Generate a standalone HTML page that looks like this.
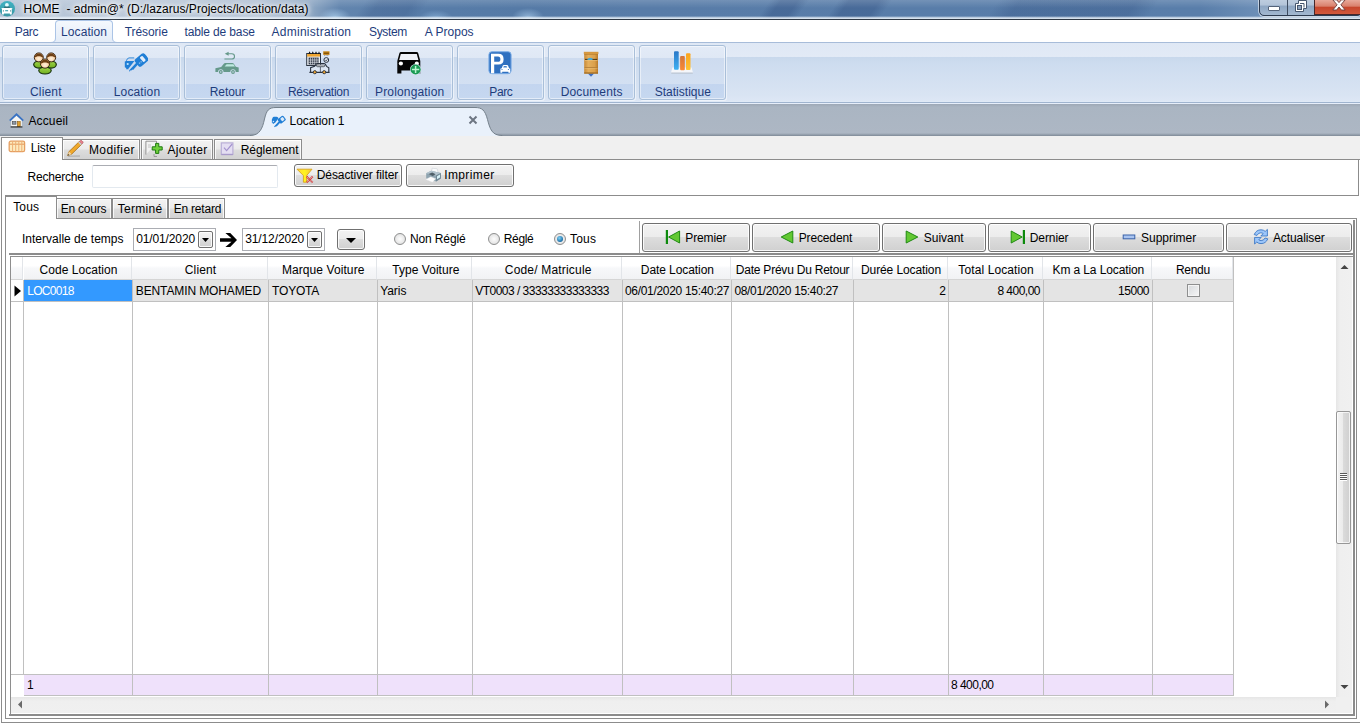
<!DOCTYPE html>
<html lang="fr"><head><meta charset="utf-8"><title>HOME - admin@* (D:/lazarus/Projects/location/data)</title>
<style>
html,body{margin:0;padding:0;}
body{width:1360px;height:723px;position:relative;overflow:hidden;background:#fff;font-family:"Liberation Sans",sans-serif;font-size:12px;}
div,span,svg{position:absolute;box-sizing:border-box;}
.t{white-space:nowrap;line-height:14px;font-size:12px;}
/* title */
#title{left:0;top:0;width:1360px;height:20px;background:
 radial-gradient(ellipse 16px 9px at 335px 17px,rgba(170,205,235,.75),rgba(170,205,235,0)),radial-gradient(ellipse 17px 8px at 436px 18px,rgba(150,190,228,.6),rgba(150,190,228,0)),radial-gradient(ellipse 16px 9px at 528px 17px,rgba(165,200,232,.7),rgba(165,200,232,0)),
 linear-gradient(rgba(255,255,255,.16),rgba(255,255,255,0) 8px),
 linear-gradient(125deg,rgba(40,70,120,0) 0,rgba(40,70,120,0) 300px,rgba(40,70,120,.22) 312px,rgba(40,70,120,.22) 340px,rgba(40,70,120,0) 352px,rgba(40,70,120,0) 631px,rgba(40,70,120,.33) 640px,rgba(40,70,120,.33) 654px,rgba(40,70,120,0) 663px,rgba(40,70,120,0) 687px,rgba(40,70,120,.33) 696px,rgba(40,70,120,.33) 721px,rgba(40,70,120,0) 731px,rgba(40,70,120,0) 818px,rgba(40,70,120,.26) 836px,rgba(40,70,120,.26) 932px,rgba(40,70,120,0) 950px),
 linear-gradient(90deg,#b4c4d6 0,#bac8d9 120px,#aebfd3 260px,#8fa8c4 310px,#6285ae 340px,#587da9 420px,#557aa6 520px,#587ca8 640px,#597eaa 1200px,#6d8fb7 1260px);}
#title .bl{left:0;top:16px;width:1360px;height:3px;background:linear-gradient(rgba(235,243,250,0),rgba(235,243,250,.8) 60%,rgba(235,243,250,.9));}
#title .bd{left:0;top:19px;width:1360px;height:1px;background:#2e3844;}
/* menu */
#menu{left:0;top:20px;width:1360px;height:23px;background:#fff;}
#ribbon{left:0;top:42px;width:1360px;height:62px;border-top:1px solid #a7bcd9;background:linear-gradient(#dfe8f5 0,#e2eaf6 14px,#c8d8ec 14px,#cddcef 20px,#d9e4f3 52px,#dde7f5 58px,#e6eefa 60px);}
#ribbon .bot{left:0;top:59px;width:1360px;height:1px;background:#9fb4cf;}
.rb{top:2px;width:87px;height:55px;border:1px solid #a9bfd9;border-radius:3px;background:linear-gradient(#e3ebf7 0,#dfe8f5 12px,#cddbef 12px,#d3e0f2 38px,#c3d5ef 38px,#c6d8f0 53px);box-shadow:inset 0 0 0 1px rgba(255,255,255,.5),1px 1px 0 rgba(255,255,255,.5);}
#mtab{left:55px;top:0px;width:58px;height:24px;border:1px solid #abc4e6;border-bottom:none;border-radius:4px 4px 0 0;background:linear-gradient(#f4f8fd,#e2ebf7);}
/* gray zone */
#gray{left:0;top:104px;width:1360px;height:32px;background:linear-gradient(#9da8b6 0,#aab5c2 3px,#adb7c4 29px,#8e99a6 31px,#7f8a97 32px);}
#band{left:0;top:136px;width:1360px;height:24px;background:#f0f0f0;}
.line{background:#8c8c8c;}
/* generic win7 button */
.btn{border:1px solid #707070;border-radius:3px;background:linear-gradient(#f3f3f3 0,#ececec 48%,#dddddd 50%,#d0d0d0 100%);box-shadow:inset 0 0 0 1px rgba(255,255,255,.85);}
.tab{border:1px solid #8c8c8c;border-bottom:none;background:linear-gradient(#f3f3f3 0,#ebebeb 48%,#dddddd 52%,#d2d2d2 100%);box-shadow:inset 1px 1px 0 rgba(255,255,255,.8),inset -1px 0 0 rgba(255,255,255,.8);}
.tabsel{border:1px solid #8c8c8c;border-bottom:none;background:#fff;}
.hdr{top:257px;height:23px;background:linear-gradient(#ffffff 0,#ffffff 40%,#f7f8fa 50%,#f1f2f4 100%);border-right:1px solid #e2e5e9;border-bottom:1px solid #d5d5d5;}
.vl{top:257px;width:1px;height:438px;background:#c0c0c0;}
.radio{width:12px;height:12px;border-radius:50%;border:1px solid #8e8f8f;background:radial-gradient(circle at 50% 50%,#fdfdfd 0,#e8e8e8 60%,#cfcfcf 100%);}

</style></head><body>
<div id="title"><div class="bl"></div><div class="bd"></div>
<!-- app icon -->
<svg style="left:0;top:1px" width="16" height="17" viewBox="0 0 16 17"><defs><linearGradient id="gti" x1="0" y1="0" x2="0" y2="1"><stop offset="0" stop-color="#3fb2c2"/><stop offset="1" stop-color="#3a97a5"/></linearGradient></defs><circle cx="7.200" cy="7.800" r="7.800" fill="url(#gti)"/><circle cx="6.900" cy="4" r="1.900" fill="#e4fbff"/><path d="M3.800 7l.7-1.500h4.800l.7 1.500z" fill="#2f6f78"/><path d="M1.100 7.400l1.300-.5h9l1.300 .5-.9 .7v5.400h-1.900v-1h-6v1h-1.900v-5.400z" fill="#fff"/><rect x="5.200" y="9" width="2.900" height="1.300" fill="#56aebc"/><rect x="2.900" y="9.300" width="1" height="1.200" fill="#4a8a90"/><rect x="10.100" y="9.300" width="1" height="1.200" fill="#4a8a90"/></svg>
<!-- caption buttons -->
<div style="left:1259px;top:-4px;width:103px;height:20px;border:1px solid #2d3b50;border-radius:0 0 5px 5px;background:linear-gradient(#c3d1e2 0,#b3c4d9 45%,#8ea6c3 50%,#a3b8d0 100%);box-shadow:0 0 0 1px rgba(255,255,255,.55)"></div>
<div style="left:1287px;top:0;width:1px;height:15px;background:#3d4b60"></div>
<div style="left:1314px;top:0;width:46px;height:15px;background:linear-gradient(#e8a99a 0,#d9806c 45%,#c6452c 50%,#d2593c 100%);border-left:1px solid #46272a;border-bottom:1px solid #46272a"></div>
<div style="left:1268px;top:6px;width:12px;height:5px;background:#fff;border:1px solid #54637a;border-radius:1px"></div>
<svg style="left:1294px;top:0" width="14" height="13" viewBox="0 0 14 13"><path d="M4.5 0.5h8v8h-3v3h-8v-8h3z" fill="#fff" stroke="#46566e"/><rect x="3.5" y="5.5" width="4" height="4" fill="#8ea3bd" stroke="#46566e"/><path d="M6 3.5h4v4" fill="none" stroke="#46566e"/></svg>
<svg style="left:1332px;top:-1px" width="14" height="12" viewBox="0 0 14 12"><path d="M.8 .8h3.800l2.400 2.800 2.400-2.800h3.800l-4.300 5 4.300 5.200h-3.800l-2.400-3-2.400 3h-3.800l4.300-5.200z" fill="#fff" stroke="#6b3a38" stroke-width=".9"/></svg>
</div>
<div id="menu"><div id="mtab"></div>
<svg style="left:51px;top:18px" width="5" height="5" viewBox="0 0 5 5"><path d="M0 4.500 Q4.500 4.500 4.500 0 L5 0 L5 5 L0 5Z" fill="#e4ecf8"/><path d="M0 4.500 Q4.500 4.500 4.500 0" fill="none" stroke="#abc4e6"/></svg>
<svg style="left:112px;top:18px" width="5" height="5" viewBox="0 0 5 5"><path d="M5 4.500 Q.5 4.500 .5 0 L0 0 L0 5 L5 5Z" fill="#e4ecf8"/><path d="M5 4.500 Q.5 4.500 .5 0" fill="none" stroke="#abc4e6"/></svg>
</div>
<div id="ribbon"><div class="bot"></div>
<div class="rb" style="left:2px"></div><div class="rb" style="left:93px"></div><div class="rb" style="left:184px"></div><div class="rb" style="left:275px"></div><div class="rb" style="left:366px"></div><div class="rb" style="left:457px"></div><div class="rb" style="left:548px"></div><div class="rb" style="left:639px"></div>
</div>
<div id="gray"></div>
<!-- doc active tab -->
<svg style="left:250px;top:104px" width="256" height="33" viewBox="250 104 256 33"><path d="M250 135.500 C260 135.500 262.500 128 264.500 119 C266.500 110 269 107.500 276 107.500 L475 107.500 C482 107.500 485 110 487.500 119.500 C490 129 492 135.500 502 135.500 L502 137 L250 137 Z" fill="#e9f1fb" stroke="#75818c" stroke-width="1"/><rect x="250" y="136" width="256" height="1" fill="#e9f1fb"/></svg>
<div id="band"></div>
<!-- outer tab control -->
<div style="left:1px;top:160px;width:1359px;height:563px;background:#fff"></div>
<div class="line" style="left:1px;top:159px;width:1359px;height:1px"></div>
<div class="line" style="left:1358px;top:160px;width:1px;height:36px"></div>
<div class="line" style="left:5px;top:195px;width:1354px;height:1px"></div>
<div class="line" style="left:1px;top:160px;width:1px;height:563px"></div>
<div class="line" style="left:1px;top:722px;width:1359px;height:1px"></div>
<div class="tab" style="left:62px;top:139px;width:78px;height:20px"></div>
<div class="tab" style="left:141px;top:139px;width:72px;height:20px"></div>
<div class="tab" style="left:214px;top:139px;width:88px;height:20px"></div>
<div class="tabsel" style="left:1px;top:137px;width:62px;height:23px"></div>
<div style="left:2px;top:159px;width:60px;height:2px;background:#fff"></div>
<!-- search -->
<div style="left:92px;top:165px;width:186px;height:23px;border:1px solid #e3e9ef;border-top-color:#abadb3;border-radius:2px;background:#fff"></div>
<div class="btn" style="left:294px;top:164px;width:108px;height:23px"></div>
<div class="btn" style="left:406px;top:164px;width:108px;height:23px"></div>
<!-- inner tab control -->
<div style="left:5px;top:218px;width:1352px;height:501px;border:1px solid #8c8c8c;background:#fff"></div>
<div class="tab" style="left:56px;top:198px;width:56px;height:20px"></div>
<div class="tab" style="left:112px;top:198px;width:56px;height:20px"></div>
<div class="tab" style="left:168px;top:198px;width:57px;height:20px"></div>
<div class="tabsel" style="left:5px;top:196px;width:52px;height:23px"></div>
<div style="left:6px;top:218px;width:50px;height:2px;background:#fff"></div>
<!-- filter row -->
<div style="left:133px;top:228px;width:83px;height:23px;border:1px solid #abadb3;background:#fff"></div>
<div style="left:242px;top:228px;width:83px;height:23px;border:1px solid #abadb3;background:#fff"></div>
<div class="btn" style="left:198px;top:231px;width:15px;height:17px;border-radius:2px"></div>
<div class="btn" style="left:307px;top:231px;width:15px;height:17px;border-radius:2px"></div>
<svg style="left:201px;top:237px" width="9" height="6"><path d="M1 1h7l-3.500 4z" fill="#000"/></svg>
<svg style="left:310px;top:237px" width="9" height="6"><path d="M1 1h7l-3.500 4z" fill="#000"/></svg>
<svg style="left:219px;top:232px" width="19" height="16" viewBox="219 232 19 16"><path d="M220 238.200H231.500L225.400 233H230.200L237 240L230.200 247H225.400L231.500 241.800H220Z" fill="#000"/></svg>
<div class="btn" style="left:337px;top:229px;width:28px;height:21px"></div>
<svg style="left:345px;top:237px" width="12" height="7"><path d="M1 1h10l-5 5z" fill="#000"/></svg>
<div class="radio" style="left:394px;top:233px"></div>
<div class="radio" style="left:488px;top:233px"></div>
<div class="radio" style="left:554px;top:233px"></div>
<div style="left:557px;top:236px;width:6px;height:6px;border-radius:50%;background:radial-gradient(circle at 40% 35%,#7fd0f5,#1c6fa8 70%,#14456e)"></div>
<div style="left:639px;top:221px;width:1px;height:33px;background:#a0a0a0"></div>
<div class="btn" style="left:642px;top:223px;width:108px;height:29px"></div>
<div class="btn" style="left:752px;top:223px;width:128px;height:29px"></div>
<div class="btn" style="left:882px;top:223px;width:104px;height:29px"></div>
<div class="btn" style="left:988px;top:223px;width:103px;height:29px"></div>
<div class="btn" style="left:1093px;top:223px;width:131px;height:29px"></div>
<div class="btn" style="left:1226px;top:223px;width:126px;height:29px"></div>
<!-- grid -->
<div style="left:9px;top:253px;width:1346px;height:2px;background:#8c8c8c"></div>
<div style="left:1353px;top:220px;width:2px;height:496px;background:#8c8c8c"></div>
<div style="left:9px;top:714px;width:1346px;height:2px;background:#8c8c8c"></div>
<div style="left:10px;top:256px;width:1343px;height:1px;background:#8e8e8e"></div>
<div style="left:10px;top:256px;width:1px;height:458px;background:#8e8e8e"></div>
<div style="left:11px;top:280px;width:1223px;height:21px;background:#e4e4e4"></div>
<div style="left:11px;top:280px;width:13px;height:21px;background:#fff"></div>
<div style="left:24px;top:280px;width:108px;height:21px;background:#3399ff"></div>
<div style="left:11px;top:301px;width:1223px;height:1px;background:#c0c0c0"></div>
<div class="hdr" style="left:11px;width:12px"></div>
<div class="hdr" style="left:24px;width:108px"></div>
<div class="hdr" style="left:132px;width:136px"></div>
<div class="hdr" style="left:268px;width:109px"></div>
<div class="hdr" style="left:377px;width:95px"></div>
<div class="hdr" style="left:472px;width:150px"></div>
<div class="hdr" style="left:622px;width:109px"></div>
<div class="hdr" style="left:731px;width:122px"></div>
<div class="hdr" style="left:853px;width:95px"></div>
<div class="hdr" style="left:948px;width:95px"></div>
<div class="hdr" style="left:1043px;width:109px"></div>
<div class="hdr" style="left:1152px;width:81px"></div>
<div style="left:24px;top:675px;width:1210px;height:20px;background:#efe1fb"></div>
<div style="left:11px;top:674px;width:1223px;height:1px;background:#c0c0c0"></div>
<div style="left:24px;top:695px;width:1210px;height:1px;background:#c0c0c0"></div>
<div class="vl" style="left:23px;top:280px;height:395px"></div>
<div class="vl" style="left:132px;top:280px;height:416px"></div>
<div class="vl" style="left:268px;top:280px;height:416px"></div>
<div class="vl" style="left:377px;top:280px;height:416px"></div>
<div class="vl" style="left:472px;top:280px;height:416px"></div>
<div class="vl" style="left:622px;top:280px;height:416px"></div>
<div class="vl" style="left:731px;top:280px;height:416px"></div>
<div class="vl" style="left:853px;top:280px;height:416px"></div>
<div class="vl" style="left:948px;top:280px;height:416px"></div>
<div class="vl" style="left:1043px;top:280px;height:416px"></div>
<div class="vl" style="left:1152px;top:280px;height:416px"></div>
<div class="vl" style="left:1233px;top:257px;height:439px"></div>
<svg style="left:14px;top:285px" width="8" height="12"><path d="M0.500 0.500l6.500 5.500-6.500 5.500z" fill="#000"/></svg>
<div style="left:1187px;top:284px;width:13px;height:13px;border:1px solid #8e8f8f;background:linear-gradient(135deg,#d6d9dc,#f6f6f6);box-shadow:inset 0 0 0 1px #f4f4f4"></div>
<!-- scrollbars -->
<div style="left:1336px;top:257px;width:16px;height:440px;background:linear-gradient(90deg,#e6e6e6,#efefef 4px,#f0f0f0)"></div>
<div style="left:11px;top:697px;width:1325px;height:16px;background:linear-gradient(#e6e6e6,#efefef 4px,#f0f0f0)"></div>
<div style="left:1336px;top:697px;width:16px;height:16px;background:#f0f0f0"></div>
<div style="left:1336px;top:411px;width:15px;height:133px;border:1px solid #979797;border-radius:2px;background:linear-gradient(90deg,#f4f4f4 0,#ebebeb 45%,#dadada 50%,#cfcfcf 100%);box-shadow:inset 0 0 0 1px rgba(255,255,255,.7)"></div>
<div style="left:1340px;top:473px;width:7px;height:1px;background:#5a5a5a;box-shadow:0 2px 0 #5a5a5a,0 4px 0 #5a5a5a,0 6px 0 #5a5a5a,0 1px 0 #fff,0 3px 0 #fff,0 5px 0 #fff,0 7px 0 #fff"></div>
<svg style="left:1340px;top:264px" width="9" height="6"><path d="M0.500 5l4-4 4 4z" fill="#444"/></svg>
<svg style="left:1340px;top:684px" width="9" height="6"><path d="M0.500 1l4 4 4-4z" fill="#444"/></svg>
<svg style="left:17px;top:700px" width="6" height="9"><path d="M5 0.500l-4 4 4 4z" fill="#6a6a6a"/></svg>
<svg style="left:1324px;top:700px" width="6" height="9"><path d="M1 0.500l4 4-4 4z" fill="#6a6a6a"/></svg>
<!-- ribbon icons -->
<svg style="left:33px;top:51px" width="24" height="24" viewBox="0 0 24 24">
<defs><radialGradient id="gsk" cx=".5" cy=".65" r=".6"><stop offset="0" stop-color="#fff1dc"/><stop offset="1" stop-color="#f3c08a"/></radialGradient>
<linearGradient id="ggr" x1="0" y1="0" x2="0" y2="1"><stop offset="0" stop-color="#9fd44a"/><stop offset="1" stop-color="#6fae1e"/></linearGradient></defs>
<ellipse cx="5.600" cy="13.600" rx="4.900" ry="3.500" fill="url(#ggr)" stroke="#16300a" stroke-width="1.200"/>
<circle cx="5.800" cy="6.400" r="4.500" fill="url(#gsk)" stroke="#2e1c0a" stroke-width=".9"/>
<path d="M1.200 7.200a4.600 4.600 0 0 1 9.200 0c-1.400-1.500-3-1.900-4.600-1.900s-3.200 .4-4.600 1.900z" fill="#6e3f14"/>
<ellipse cx="18.400" cy="13.600" rx="4.900" ry="3.500" fill="url(#ggr)" stroke="#16300a" stroke-width="1.200"/>
<circle cx="18.200" cy="6.400" r="4.500" fill="url(#gsk)" stroke="#2e1c0a" stroke-width=".9"/>
<path d="M13.600 7.200a4.600 4.600 0 0 1 9.200 0c-1.400-1.500-3-1.900-4.600-1.900s-3.200 .4-4.600 1.900z" fill="#6e3f14"/>
<ellipse cx="12" cy="19.600" rx="6.200" ry="3.400" fill="url(#ggr)" stroke="#16300a" stroke-width="1.200"/>
<circle cx="12" cy="12.600" r="4.600" fill="url(#gsk)" stroke="#2e1c0a" stroke-width=".9"/>
<path d="M7.300 13.400a4.700 4.700 0 0 1 9.400 0c-1.400-1.500-3.100-1.900-4.700-1.900s-3.300 .4-4.700 1.900z" fill="#6e3f14"/>
</svg>
<svg style="left:124px;top:51px" width="24" height="24" viewBox="0 0 24 24">
<g fill="#217fd6">
<path d="M.8 10.400l1.400-.5h8.200l-5.400 7h-.4v1.400h-2.400v-1.400l-1.400-.6z"/>
<path d="M5.400 20.800l-.2-1.500 8.200-8.900 1.900 1.700-6.200 6.900-.8-.6-.6 1.100-.9-.6-.6 1.100z"/>
<g transform="rotate(-40 17.600 9)"><rect x="11.400" y="4.300" width="12.400" height="9.400" rx="2.200"/><rect x="17.600" y="6" width="3.200" height="6" rx=".9" fill="#e4eefa"/><rect x="13.400" y="9.400" width="1.300" height="1.300" fill="#8fc0ee"/><rect x="15.400" y="9.400" width="1.300" height="1.300" fill="#8fc0ee"/></g>
</g>
<path d="M2.400 9.800q.6-2.600 2.600-2.900h5.200" fill="none" stroke="#217fd6" stroke-width=".9"/>
<circle cx="3.700" cy="13" r="1.100" fill="#bfe6ff"/>
<path d="M19.800 3.300q2.400.7 2.900 3.200" fill="none" stroke="#217fd6" stroke-width=".8"/>
</svg>
<svg style="left:215px;top:51px" width="24" height="24" viewBox="0 0 24 24">
<g fill="#65998a">
<path d="M.4 17.200l5.800-1.300 2.600-3.200q.5-.6 1.400-.6h7.200q.9 0 1.400.7l2 3 2.900.7v4.500h-3a2.700 2.700 0 0 0-5.400 0h-6.800a2.700 2.700 0 0 0-5.400 0h-2.700z"/>
<circle cx="5.800" cy="21" r="1.900"/><circle cx="18" cy="21" r="1.900"/><circle cx="5.800" cy="21" r=".8" fill="#cfdcef"/><circle cx="18" cy="21" r=".8" fill="#cfdcef"/>
<path d="M13.600 .8v4l-3.800-2z"/>
</g>
<path d="M9.600 15.600l2-2.400h6.800l1.600 2.400z" fill="#bfeae0"/>
<path d="M12.500 2.800h4.300q2.700 0 2.700 2.600t-2.700 2.600h-7.400" fill="none" stroke="#65998a" stroke-width="1.100"/>
</svg>
<svg style="left:306px;top:51px" width="24" height="24" viewBox="0 0 24 24">
<rect x=".7" y="2.500" width="13.800" height="12" fill="#e9edf2" stroke="#2b3340" stroke-width="1"/>
<rect x="1.200" y="3" width="12.800" height="2.600" fill="#f0a530"/>
<rect x="2.600" y="6.600" width="10" height="6.800" fill="#323a48"/>
<path d="M4.500 6.600v6.800M6.600 6.600v6.800M8.700 6.600v6.800M10.800 6.600v6.800M2.600 9h10M2.600 11.300h10" stroke="#e9edf2" stroke-width=".6"/>
<path d="M2.400 2.800l1.200-2.600 1.200 2.600zM5.600 2.800l1.200-2.600 1.200 2.600zM8.800 2.800l1.200-2.600 1.200 2.600zM12 2.800l1-2.600 1 2.600z" fill="#111"/>
<rect x="17.200" y=".3" width="6.300" height="3.600" fill="#c88414"/><rect x="17.800" y="1.700" width="5.100" height="1" fill="#6b4306"/>
<path d="M18 4.600h5" stroke="#555" stroke-width=".5" stroke-dasharray="1 .6"/>
<circle cx="20.300" cy="9" r="2.400" fill="#dfe6ee" stroke="#2b3340" stroke-width="1"/><path d="M19.300 9.300l.8.700 1.400-1.800" fill="none" stroke="#2b3340" stroke-width=".7"/>
<path d="M3.400 21.400h20.200M4.600 21v-4.400l4-1.200 1.600-2.300q.4-.6 1.200-.6h6.600q.8 0 1.200.6l1.400 2.300 2.200 1.400v4.200" fill="rgba(255,255,255,.3)" stroke="#2b3340" stroke-width="1.100"/>
<rect x="10.600" y="14" width="8" height="1.700" rx=".8" fill="#fff" stroke="#2b3340" stroke-width=".8"/>
<path d="M14.400 16v5" stroke="#2b3340" stroke-width=".7"/>
<circle cx="8.800" cy="21.200" r="1.600" fill="#f0a530" stroke="#2b3340" stroke-width=".9"/><circle cx="18.200" cy="21.200" r="1.600" fill="#f0a530" stroke="#2b3340" stroke-width=".9"/>
</svg>
<svg style="left:397px;top:51px" width="24" height="24" viewBox="0 0 24 24">
<path d="M.3 22.600v-12.600l2-7.600q.4-1.300 1.800-1.300h15.400q1.400 0 1.800 1.300l2 7.600v12.600h-4.200v-3.200h-14.700v3.200z" fill="#050505"/>
<path d="M3.800 3h16l1.600 5.900h-19.200z" fill="#eef1f7"/>
<circle cx="3.900" cy="12.500" r="2.100" fill="#fff"/><circle cx="19.800" cy="12.500" r="2.100" fill="#fff"/>
<circle cx="18.600" cy="18.500" r="5.600" fill="#dfe9f5"/>
<circle cx="18.600" cy="18.500" r="5.100" fill="#1b9a55"/>
<path d="M18.600 14.900v7.200M15 18.500h7.200" stroke="#b9f5cf" stroke-width="1.500"/>
</svg>
<svg style="left:488px;top:51px" width="24" height="24" viewBox="0 0 24 24">
<rect x=".9" y=".7" width="22.200" height="22" rx="3" fill="#2f70c0" stroke="#7eaee6" stroke-width="1"/>
<path d="M3 2.800h7.400q5.200 0 5.200 5.400t-5.200 5.400h-4.200v8.700h-3.200zM6.200 5.600v5.200h3.800q2.400 0 2.400-2.600t-2.400-2.600z" fill="#fff"/>
<path d="M12.400 21.800v-4l1.300-.6 1.100-2.600q.3-.7 1-.7h3.200q.7 0 1 .7l1.100 2.600 1.100.6v4h-1.800v-1.100h-6.200v1.100z" fill="#fff"/>
<path d="M15.200 16.600l.7-1.600h2.600l.7 1.600z" fill="#4a86cc"/><circle cx="14" cy="18.500" r=".6" fill="#2f70c0"/><circle cx="20.400" cy="18.500" r=".6" fill="#2f70c0"/>
</svg>
<svg style="left:579px;top:51px" width="24" height="26" viewBox="0 0 24 26">
<defs><linearGradient id="gwd" x1="0" y1="0" x2="1" y2="0"><stop offset="0" stop-color="#c98a36"/><stop offset=".3" stop-color="#e4ae5c"/><stop offset=".75" stop-color="#dba04a"/><stop offset="1" stop-color="#b97a2a"/></linearGradient></defs>
<path d="M8.200 21.800h7.600l-3.800 4z" fill="#3f6fc0"/>
<rect x="5.200" y="1.600" width="13.800" height="21" fill="url(#gwd)"/>
<rect x="4.800" y=".8" width="14.600" height="2.200" fill="#d59840"/>
<rect x="5.200" y="3" width="13.800" height=".6" fill="#b27a2c"/>
<rect x="6" y="7.900" width="12.200" height=".9" fill="#3a2a10"/>
<path d="M8 8.300q2.500-3 6.200-.3l-1.400 1.100h-3.600z" fill="#45a9d8"/>
<rect x="5.600" y="9" width="13" height=".6" fill="#edc47e"/>
<rect x="5.600" y="16" width="13" height=".8" fill="#a06a22"/><rect x="5.600" y="16.800" width="13" height=".6" fill="#edc47e"/>
<rect x="5.200" y="21.400" width="13.800" height="1.200" fill="#a06a22"/>
</svg>
<svg style="left:670px;top:51px" width="24" height="24" viewBox="0 0 24 24">
<defs><linearGradient id="gb1" x1="0" y1="0" x2="0" y2="1"><stop offset="0" stop-color="#2a78c8"/><stop offset="1" stop-color="#3db0f2"/></linearGradient>
<linearGradient id="gb2" x1="0" y1="0" x2="0" y2="1"><stop offset="0" stop-color="#d4763a"/><stop offset="1" stop-color="#fb8a34"/></linearGradient>
<linearGradient id="gb3" x1="0" y1="0" x2="0" y2="1"><stop offset="0" stop-color="#fba41e"/><stop offset="1" stop-color="#fdc334"/></linearGradient></defs>
<path d="M2.400 16.600h19.200l1.400 5.200h-22z" fill="#f4f6fa"/><path d="M1.200 21.600h21.600v1h-21.600z" fill="#b8c0cc"/>
<rect x="4" y=".2" width="4.700" height="18.600" rx="1" fill="url(#gb1)"/>
<rect x="10.100" y="5" width="4.700" height="14.300" rx="1" fill="url(#gb2)"/>
<rect x="16" y="2.200" width="4.500" height="16.900" rx="1" fill="url(#gb3)"/>
</svg>
<!-- doc tab icons -->
<svg style="left:9px;top:113px" width="15" height="15" viewBox="0 0 15 15">
<path d="M2.200 7.200l5.300-4.600 5.300 4.600v6.300h-10.600z" fill="#f6f6f4"/>
<path d="M.8 7.600l6.700-6.200 6.700 6.200" fill="none" stroke="#3b74c4" stroke-width="1.900"/>
<rect x="3.400" y="8.600" width="3.600" height="2.600" fill="#8c98a8" stroke="#444" stroke-width=".6"/>
<rect x="8.400" y="8.600" width="2.800" height="5" fill="#e0a030" stroke="#8a5a10" stroke-width=".6"/>
<rect x="1.600" y="13.400" width="11.800" height="1.100" fill="#222"/>
</svg>
<svg style="left:271px;top:115px" width="15" height="13" viewBox="0 0 24 21">
<g fill="#217fd6">
<path d="M1.300 7.300l1.400-3.200q.5-1.200 2-1.200h4.200q1.300 0 2 .9l1.200 1.600-5.800 7.400h-1.300v1.200h-2.300v-1.400h-1.400v-4z"/>
<path d="M4.800 18.600l8.200-9 2.400 2.200-6.300 6.900-.9-.6-.5 1-.9-.5-.6 1.100z"/>
<g transform="rotate(-38 17.200 7.600)"><rect x="11.600" y="3" width="11.400" height="9.200" rx="2.200"/><rect x="16" y="4.800" width="5.200" height="5.600" rx="1.400" fill="#dbe9f8"/></g>
</g><circle cx="3.800" cy="10.400" r="1.200" fill="#cfe6ff"/>
</svg>
<!-- close x -->
<svg style="left:468px;top:115px" width="10" height="10" viewBox="0 0 10 10"><path d="M1.500 1.500l7 7M8.500 1.500l-7 7" stroke="#6d7682" stroke-width="2"/></svg>
<!-- sub tab icons -->
<svg style="left:8px;top:140px" width="18" height="13" viewBox="0 0 18 13">
<rect x="1.200" y="1.200" width="15.400" height="10.400" rx="1.600" fill="#fdebbf" stroke="#e59f62" stroke-width="1.300"/>
<path d="M1.200 4.200h15.400" stroke="#e59f62" stroke-width="1.100"/>
<path d="M4.600 1.500v10M7.700 1.500v10M10.800 1.500v10M13.800 1.500v10" stroke="#eeb076" stroke-width="1"/>
</svg>
<svg style="left:66px;top:140px" width="18" height="17" viewBox="0 0 18 17">
<path d="M2 16.200l12-.2" stroke="#9a9a9a" stroke-width=".8"/>
<path d="M1.600 15.600l1.400-4 10.200-10 2.600 2.600-10.200 10z" fill="#f0a92c" stroke="#9a6414" stroke-width=".7"/>
<path d="M1.600 15.600l1.400-4 2.600 2.600z" fill="#f3d7a8"/><path d="M1.600 15.600l.6-1.700 1.100 1.100z" fill="#333"/>
<path d="M13.200 1.600l1.200-1q.8-.6 1.600.2l.8.800q.8.800 0 1.600l-1 1z" fill="#e8808c" stroke="#9a4a50" stroke-width=".5"/>
<path d="M12.200 2.600l2.600 2.600 1-1-2.600-2.600z" fill="#c8ccd4"/>
</svg>
<svg style="left:145px;top:140px" width="18" height="17" viewBox="0 0 18 17">
<path d="M.9 14.600v-13.400h10.600v2" fill="#f2f2f2" stroke="#8a8a8a" stroke-width=".9"/>
<path d="M9 14v2.500h3" fill="none" stroke="#8a8a8a" stroke-width=".8"/>
<path d="M3 5h3M3 7h3" stroke="#b8b8b8" stroke-width=".8"/>
<path d="M10.600 3.400h3.200v3.400h3.400v3.200h-3.400v3.400h-3.200v-3.400h-3.400v-3.200h3.400z" fill="#6fd03c" stroke="#1f7a10" stroke-width="1"/>
</svg>
<svg style="left:220px;top:142px" width="15" height="14" viewBox="0 0 15 14">
<rect x="1.300" y=".9" width="11.600" height="11.400" fill="#e4def2" stroke="#b9aed6" stroke-width="1.200"/>
<path d="M1.300 12.600h11.600" stroke="#a99bcb" stroke-width="1.200"/>
<path d="M4 5.600l2.600 3 5.600-6.600" fill="none" stroke="#a594cf" stroke-width="1.200"/>
</svg>
<!-- filter icon -->
<svg style="left:296px;top:168px" width="18" height="16" viewBox="0 0 18 16">
<defs><linearGradient id="gfl" x1="0" y1="0" x2="1" y2="0"><stop offset="0" stop-color="#ffd93a"/><stop offset=".5" stop-color="#fff41e"/><stop offset="1" stop-color="#f5c63a"/></linearGradient></defs>
<path d="M1 1.200h15l-5.400 6.400v6.600h-3.200v-6.600z" fill="url(#gfl)" stroke="#d9a31e" stroke-width=".9"/>
<path d="M10.800 8.600l5.800 6M16.600 8.600l-5.800 6" stroke="#d83a3a" stroke-width="2.100" stroke-dasharray="1 .5"/>
</svg>
<!-- printer -->
<svg style="left:425px;top:167px" width="17" height="16" viewBox="0 0 17 16">
<path d="M7 1.200l5.200.6 1 4.200-6.400-.4z" fill="#fafbfc" stroke="#c2c8ce" stroke-width=".5"/>
<path d="M1.200 6.200l5-2.400 9.600 2.200v5.600l-4.600 2.800-10-3z" fill="#8fa4b0"/>
<path d="M1.200 6.200l5-2.400 9.600 2.200-4.800 2.600z" fill="#b4c4ce"/>
<path d="M11 8.600l4.800-2.600v5.600l-4.800 2.800z" fill="#6f8794"/>
<path d="M12 9.200l3-1.600v3l-3 1.700z" fill="#d6f0f6"/>
<path d="M3.600 7l3.600-1.600 3.400 1.800-3 1.800z" fill="#4f5f68"/>
<path d="M.6 12.400l5.200-2.600 5 2-3.400 3.400z" fill="#fdfdfd" stroke="#d8dce0" stroke-width=".4"/>
</svg>
<!-- nav icons -->
<svg style="left:665px;top:229px" width="16" height="16" viewBox="0 0 16 16"><rect x=".8" y="1" width="2.200" height="14" fill="#0d8a0d"/><path d="M3.600 8l11-6v12z" fill="#62c832" stroke="#1f8a12" stroke-width="1"/></svg>
<svg style="left:780px;top:230px" width="14" height="14" viewBox="0 0 14 14"><path d="M1.200 7l11.600-6v12z" fill="#62c832" stroke="#1f8a12" stroke-width="1"/></svg>
<svg style="left:905px;top:230px" width="14" height="14" viewBox="0 0 14 14"><path d="M12.800 7l-11.600-6v12z" fill="#62c832" stroke="#1f8a12" stroke-width="1"/></svg>
<svg style="left:1010px;top:229px" width="16" height="16" viewBox="0 0 16 16"><rect x="12.800" y="1" width="2.200" height="14" fill="#0d8a0d"/><path d="M12.200 8l-11-6v12z" fill="#62c832" stroke="#1f8a12" stroke-width="1"/></svg>
<svg style="left:1122px;top:234px" width="14" height="6" viewBox="0 0 14 6"><rect x="1.200" y="1" width="11.600" height="3.800" fill="#a9c4f0" stroke="#3a62a8" stroke-width="1"/></svg>
<svg style="left:1253px;top:228px" width="16" height="18" viewBox="0 0 16 18">
<path d="M1.200 6.600q2-4.800 6.800-4.800 2.600 0 4.200 1.600l2.200-2v6.600h-6.600l2.400-2.400q-1-.8-2.400-.8-2.600 0-3.800 2.600z" fill="#9cc6fa" stroke="#3d78c4" stroke-width=".9"/>
<path d="M14.800 10.800q-2 4.800-6.800 4.800-2.600 0-4.200-1.600l-2.200 2v-6.600h6.600l-2.400 2.400q1 .8 2.400.8 2.600 0 3.800-2.600z" fill="#9cc6fa" stroke="#3d78c4" stroke-width=".9"/>
</svg>

<span class="t" style="left:23.5px;top:2px;color:#000;letter-spacing:0.040px;white-space:pre;text-shadow:0 0 4px #fff,0 0 6px #fff,0 0 8px #fff;">HOME  - admin@* (D:/lazarus/Projects/location/data)</span>
<span class="t" style="left:14.8px;top:25px;color:#1e3c7b;letter-spacing:-0.322px;">Parc</span>
<span class="t" style="left:61.1px;top:25px;color:#1e3c7b;letter-spacing:0.066px;">Location</span>
<span class="t" style="left:124.7px;top:25px;color:#1e3c7b;letter-spacing:-0.060px;">Trésorie</span>
<span class="t" style="left:184.5px;top:25px;color:#1e3c7b;letter-spacing:-0.136px;">table de base</span>
<span class="t" style="left:271.5px;top:25px;color:#1e3c7b;letter-spacing:0.269px;">Administration</span>
<span class="t" style="left:369.0px;top:25px;color:#1e3c7b;letter-spacing:-0.353px;">System</span>
<span class="t" style="left:424.8px;top:25px;color:#1e3c7b;letter-spacing:0.012px;">A Propos</span>
<span class="t" style="left:30.0px;top:85px;color:#1e3c7b;letter-spacing:0.169px;">Client</span>
<span class="t" style="left:113.8px;top:85px;color:#1e3c7b;letter-spacing:0.128px;">Location</span>
<span class="t" style="left:209.8px;top:85px;color:#1e3c7b;letter-spacing:-0.089px;">Retour</span>
<span class="t" style="left:287.9px;top:85px;color:#1e3c7b;letter-spacing:-0.248px;">Réservation</span>
<span class="t" style="left:375.0px;top:85px;color:#1e3c7b;letter-spacing:0.159px;">Prolongation</span>
<span class="t" style="left:489.3px;top:85px;color:#1e3c7b;letter-spacing:-0.422px;">Parc</span>
<span class="t" style="left:560.8px;top:85px;color:#1e3c7b;letter-spacing:0.111px;">Documents</span>
<span class="t" style="left:654.7px;top:85px;color:#1e3c7b;letter-spacing:0.014px;">Statistique</span>
<span class="t" style="left:28.5px;top:114px;color:#000;letter-spacing:0.116px;">Accueil</span>
<span class="t" style="left:289.5px;top:114px;color:#000;letter-spacing:-0.039px;">Location 1</span>
<span class="t" style="left:30.7px;top:141px;color:#000;letter-spacing:-0.112px;">Liste</span>
<span class="t" style="left:88.9px;top:143px;color:#000;letter-spacing:0.414px;">Modifier</span>
<span class="t" style="left:167.5px;top:143px;color:#000;letter-spacing:0.281px;">Ajouter</span>
<span class="t" style="left:240.7px;top:143px;color:#000;letter-spacing:-0.026px;">Réglement</span>
<span class="t" style="left:27.5px;top:170px;color:#000;letter-spacing:-0.203px;">Recherche</span>
<span class="t" style="left:316.7px;top:168px;color:#000;letter-spacing:-0.070px;">Désactiver filter</span>
<span class="t" style="left:444.2px;top:168px;color:#000;letter-spacing:0.382px;">Imprimer</span>
<span class="t" style="left:13.2px;top:200px;color:#000;letter-spacing:0.160px;">Tous</span>
<span class="t" style="left:60.7px;top:202px;color:#000;letter-spacing:-0.232px;">En cours</span>
<span class="t" style="left:117.7px;top:202px;color:#000;letter-spacing:0.302px;">Terminé</span>
<span class="t" style="left:173.7px;top:202px;color:#000;letter-spacing:-0.207px;">En retard</span>
<span class="t" style="left:22.0px;top:232px;color:#000;letter-spacing:0.006px;">Intervalle de temps</span>
<span class="t" style="left:136.2px;top:232px;color:#000;letter-spacing:-0.126px;">01/01/2020</span>
<span class="t" style="left:245.2px;top:232px;color:#000;letter-spacing:-0.106px;">31/12/2020</span>
<span class="t" style="left:410.0px;top:232px;color:#000;letter-spacing:-0.134px;">Non Réglé</span>
<span class="t" style="left:503.7px;top:232px;color:#000;letter-spacing:-0.312px;">Réglé</span>
<span class="t" style="left:570.0px;top:232px;color:#000;letter-spacing:0.210px;">Tous</span>
<span class="t" style="left:685.3px;top:231px;color:#000;letter-spacing:-0.145px;">Premier</span>
<span class="t" style="left:798.7px;top:231px;color:#000;letter-spacing:-0.134px;">Precedent</span>
<span class="t" style="left:923.8px;top:231px;color:#000;letter-spacing:-0.019px;">Suivant</span>
<span class="t" style="left:1029.8px;top:231px;color:#000;letter-spacing:-0.094px;">Dernier</span>
<span class="t" style="left:1141.0px;top:231px;color:#000;letter-spacing:-0.018px;">Supprimer</span>
<span class="t" style="left:1272.9px;top:231px;color:#000;letter-spacing:-0.089px;">Actualiser</span>
<span class="t" style="left:39.5px;top:263px;color:#000;letter-spacing:0.047px;">Code Location</span>
<span class="t" style="left:184.8px;top:263px;color:#000;letter-spacing:0.135px;">Client</span>
<span class="t" style="left:281.9px;top:263px;color:#000;letter-spacing:0.086px;">Marque Voiture</span>
<span class="t" style="left:392.2px;top:263px;color:#000;letter-spacing:0.048px;">Type Voiture</span>
<span class="t" style="left:504.8px;top:263px;color:#000;letter-spacing:0.184px;">Code/ Matricule</span>
<span class="t" style="left:640.8px;top:263px;color:#000;letter-spacing:-0.074px;">Date Location</span>
<span class="t" style="left:735.8px;top:263px;color:#000;letter-spacing:-0.223px;">Date Prévu Du Retour</span>
<span class="t" style="left:861.0px;top:263px;color:#000;letter-spacing:-0.099px;">Durée Location</span>
<span class="t" style="left:958.3px;top:263px;color:#000;letter-spacing:0.110px;">Total Location</span>
<span class="t" style="left:1052.5px;top:263px;color:#000;letter-spacing:-0.107px;">Km a La Location</span>
<span class="t" style="left:1175.9px;top:263px;color:#000;letter-spacing:-0.275px;">Rendu</span>
<span class="t" style="left:27.3px;top:284px;color:#fff;letter-spacing:-0.725px;">LOC0018</span>
<span class="t" style="left:135.8px;top:284px;color:#000;letter-spacing:-0.120px;">BENTAMIN MOHAMED</span>
<span class="t" style="left:272.1px;top:284px;color:#000;letter-spacing:-0.189px;">TOYOTA</span>
<span class="t" style="left:380.2px;top:284px;color:#000;letter-spacing:-0.051px;">Yaris</span>
<span class="t" style="left:475.2px;top:284px;color:#000;letter-spacing:-0.512px;">VT0003 / 33333333333333</span>
<span class="t" style="left:624.9px;top:284px;color:#000;letter-spacing:-0.306px;">06/01/2020 15:40:27</span>
<span class="t" style="left:734.4px;top:284px;color:#000;letter-spacing:-0.332px;">08/01/2020 15:40:27</span>
<span class="t" style="left:939.2px;top:284px;color:#000;letter-spacing:-0.888px;">2</span>
<span class="t" style="left:997.4px;top:284px;color:#000;letter-spacing:-0.515px;">8 400,00</span>
<span class="t" style="left:1118.1px;top:284px;color:#000;letter-spacing:-0.495px;">15000</span>
<span class="t" style="left:27.0px;top:678px;color:#000;letter-spacing:-1.188px;">1</span>
<span class="t" style="left:951.0px;top:678px;color:#000;letter-spacing:-0.527px;">8 400,00</span>
</body></html>
